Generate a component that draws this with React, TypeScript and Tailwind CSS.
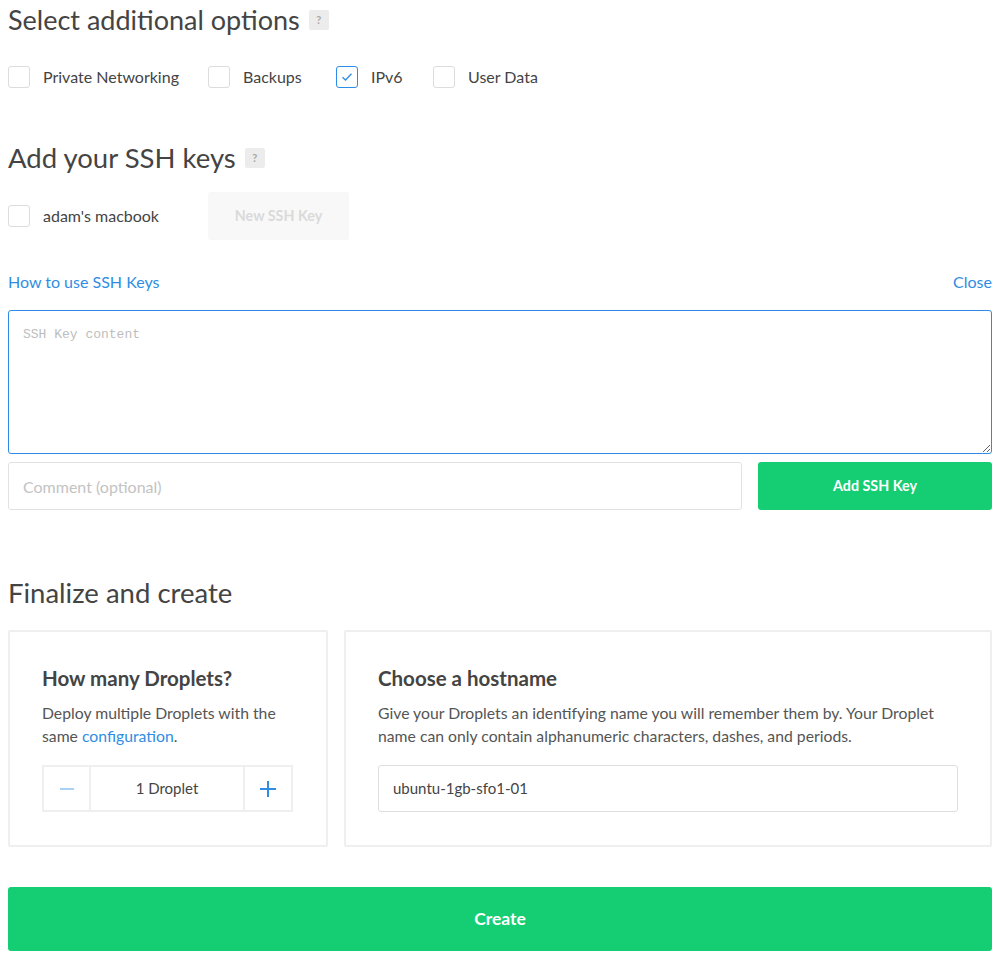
import React from "react";

const Help = () => (
  <span className="ml-[9px] inline-flex h-5 w-5 items-center justify-center rounded-[2px] bg-[#ececec] text-[11px] font-bold text-[#a9a9a9]">
    ?
  </span>
);

const Box = ({ checked = false }: { checked?: boolean }) => (
  <span
    className={
      "flex h-[22px] w-[22px] shrink-0 items-center justify-center rounded-[3px] border bg-white " +
      (checked ? "border-[#2e8de6]" : "border-[#dcdcdc]")
    }
  >
    {checked && (
      <svg width="12" height="10" viewBox="0 0 12 10" fill="none">
        <path d="M1.5 5.2 L4.5 8 L10.5 1.8" stroke="#2e8de6" strokeWidth="1.3" />
      </svg>
    )}
  </span>
);

const Opt = ({ label, checked, w }: { label: string; checked?: boolean; w: string }) => (
  <label className={"flex items-center " + w}>
    <Box checked={checked} />
    <span className="ml-[13px] text-[16px] text-[#444]">{label}</span>
  </label>
);

export default function App() {
  return (
    <div
      className="w-[1002px] bg-white pl-2 pr-[10px] text-[#444]"
      style={{ fontFamily: "Lato, 'Open Sans', sans-serif" }}
    >
      <div className="flex h-10 items-center">
        <h2 className="text-[27px] font-normal leading-10 text-[#444]">Select additional options</h2>
        <Help />
      </div>
      <div className="mt-[26px] flex h-[22px] items-center">
        <Opt label="Private Networking" w="w-[200px]" />
        <Opt label="Backups" w="w-[128px]" />
        <Opt label="IPv6" checked w="w-[97px]" />
        <Opt label="User Data" w="w-[150px]" />
      </div>

      <div className="mt-[50px] flex h-10 items-center">
        <h2 className="text-[27.5px] font-normal leading-10 text-[#444]">Add your SSH keys</h2>
        <Help />
      </div>
      <div className="mt-[14px] flex h-12 items-center">
        <Opt label="adam's macbook" w="w-[200px]" />
        <button className="h-12 w-[141px] rounded-[3px] bg-[#f8f8f8] text-[14.3px] font-bold text-[#dadada]">
          New SSH Key
        </button>
      </div>

      <div className="mt-[31px] flex h-[22px] items-center justify-between text-[16px] text-[#2f8de4]">
        <span>How to use SSH Keys</span>
        <span>Close</span>
      </div>

      <textarea
        className="mt-[17px] block h-[144px] w-full resize-y rounded-[3px] border border-[#2e8ae6] px-[14px] py-[14px] text-[13px] outline-none placeholder:text-[#bdbdbd]"
        style={{ fontFamily: "'Liberation Mono', monospace" }}
        placeholder="SSH Key content"
      />

      <div className="mt-2 flex h-12 gap-4">
        <input
          className="h-12 w-[734px] rounded-[3px] border border-[#e2e2e2] px-[14px] text-[16px] outline-none placeholder:text-[#c3c3c3]"
          placeholder="Comment (optional)"
        />
        <button className="h-12 flex-1 rounded-[3px] bg-[#15cd72] text-[14.3px] font-bold text-white">
          Add SSH Key
        </button>
      </div>

      <h2 className="mt-[63px] text-[27.5px] font-normal leading-10 text-[#444]">Finalize and create</h2>

      <div className="mt-[17px] flex gap-4">
        <div className="h-[217px] w-[320px] rounded-[2px] border-2 border-[#efefef] px-8 pt-[33px]">
          <h3 className="text-[20.5px] font-bold leading-[26px] text-[#444]">How many Droplets?</h3>
          <p className="mt-[10px] text-[15.75px] leading-[23px] text-[#555]">
            Deploy multiple Droplets with the
            <br />
            same <span className="text-[#2f8de4]">configuration</span>.
          </p>
          <div className="mt-[18px] flex h-[47px] w-[251px] border-2 border-[#efefef]">
            <div className="flex w-[47px] items-center justify-center border-r-2 border-[#efefef]">
              <span className="h-[2px] w-[14px] bg-[#a9d0f5]" />
            </div>
            <div className="flex flex-1 items-center justify-center text-[15px] text-[#444]">1 Droplet</div>
            <div className="flex w-[48px] items-center justify-center border-l-2 border-[#efefef]">
              <svg width="16" height="16" viewBox="0 0 16 16">
                <path d="M8 0 V16 M0 8 H16" stroke="#2f8de4" strokeWidth="2" />
              </svg>
            </div>
          </div>
        </div>

        <div className="h-[217px] flex-1 rounded-[2px] border-2 border-[#efefef] px-8 pt-[33px]">
          <h3 className="text-[20.5px] font-bold leading-[26px] text-[#444]">Choose a hostname</h3>
          <p className="mt-[10px] text-[15.75px] leading-[23px] text-[#555]">
            Give your Droplets an identifying name you will remember them by. Your Droplet
            <br />
            name can only contain alphanumeric characters, dashes, and periods.
          </p>
          <div className="mt-[18px] flex h-[47px] w-[580px] items-center rounded-[3px] border border-[#dedede] px-[14px] text-[15px] text-[#444]">
            ubuntu-1gb-sfo1-01
          </div>
        </div>
      </div>

      <button className="mt-10 h-16 w-full rounded-[3px] bg-[#15cd72] text-[17.5px] font-bold text-white">
        Create
      </button>
    </div>
  );
}
